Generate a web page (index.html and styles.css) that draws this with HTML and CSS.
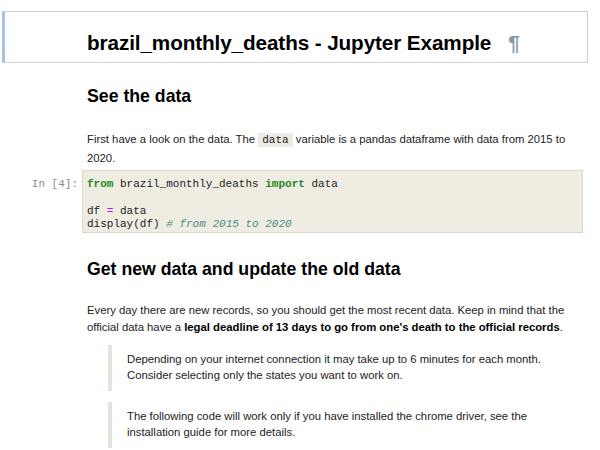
FILE: index.html
```html
<!DOCTYPE html>
<html>
<head>
<meta charset="utf-8">
<link rel="stylesheet" href="styles.css">
</head>
<body>
<div class="notebook">
  <div class="cell title-cell">
    <h1 class="title">brazil_monthly_deaths - Jupyter Example<span class="anchor">¶</span></h1>
  </div>

  <div class="cell md-cell">
    <h2 class="h2 first">See the data</h2>
    <p class="para">First have a look on the data. The <code class="inline">data</code> variable is a pandas dataframe with data from 2015 to 2020.</p>
  </div>

  <div class="cell code-cell">
    <div class="prompt">In [4]:</div>
    <pre class="code"><span class="kw">from</span> brazil_monthly_deaths <span class="kw">import</span> data

df <span class="op">=</span> data
display(df) <span class="cm"># from 2015 to 2020</span></pre>
  </div>

  <div class="cell md-cell">
    <h2 class="h2 second">Get new data and update the old data</h2>
    <p class="para para2">Every day there are new records, so you should get the most recent data. Keep in mind that the official data have a <strong>legal deadline of 13 days to go from one's death to the official records</strong>.</p>
    <blockquote class="quote">Depending on your internet connection it may take up to 6 minutes for each month. Consider selecting only the states you want to work on.</blockquote>
    <blockquote class="quote">The following code will work only if you have installed the chrome driver, see the installation guide for more details.</blockquote>
  </div>
</div>
</body>
</html>
```

FILE: styles.css
```css
html, body {
  margin: 0;
  padding: 0;
  background: #ffffff;
}
body {
  font-family: "Liberation Sans", Arial, sans-serif;
  color: #222;
  width: 600px;
  height: 450px;
  overflow: hidden;
}
.notebook {
  display: flex;
  flex-direction: column;
}
.title-cell {
  margin: 11px 12px 0 2px;
  height: 50px;
  border: 1px solid #cfcfcf;
  border-left: 3px solid #a3c4e6;
  box-sizing: content-box;
  padding-left: 82px;
}
.title {
  margin: 0;
  padding-top: 20px;
  font-size: 20.7px;
  line-height: 21px;
  font-weight: bold;
  color: #000;
  letter-spacing: -0.1px;
}
.anchor {
  color: #8399aa;
  font-weight: bold;
  margin-left: 17px;
}
.md-cell {
  padding-left: 87px;
  padding-right: 17px;
}
.h2 {
  margin: 0;
  font-size: 17.7px;
  line-height: 19px;
  font-weight: bold;
  color: #000;
}
.h2.first {
  margin-top: 24px;
}
.para {
  margin: 24px 0 0 0;
  font-size: 11.3px;
  line-height: 18px;
  color: #222;
}
.inline {
  font-family: "Liberation Mono", monospace;
  font-size: 11px;
  background: #eeebe4;
  padding: 1px 4px;
}
.code-cell {
  display: flex;
  margin-top: 3px;
}
.prompt {
  width: 79px;
  flex: none;
  text-align: right;
  padding-right: 1px;
  box-sizing: border-box;
  font-family: "Liberation Mono", monospace;
  font-size: 11px;
  line-height: 13.3px;
  padding-top: 8px;
  color: #8a8a8a;
}
.code {
  margin: 0 17px 0 3px;
  flex: 1;
  background: #efece2;
  border: 1px solid #dcd8cc;
  padding: 7px 4px 1px 4px;
  font-family: "Liberation Mono", monospace;
  font-size: 11px;
  line-height: 13.3px;
  color: #222;
}
.kw {
  color: #1d8a1d;
  font-weight: bold;
}
.op {
  color: #aa22ff;
}
.cm {
  color: #4a8c87;
  font-style: italic;
}
.h2.second {
  margin-top: 27px;
}
.para2 {
  margin-top: 23px;
  line-height: 16.5px;
}
.para2 strong {
  color: #000;
}
.quote {
  margin: 10px 0 0 21px;
  border-left: 4px solid #e6e2da;
  padding: 6px 0 8px 15px;
  font-size: 11.3px;
  line-height: 16px;
  color: #222;
}
.quote + .quote {
  margin-top: 11px;
}
```
